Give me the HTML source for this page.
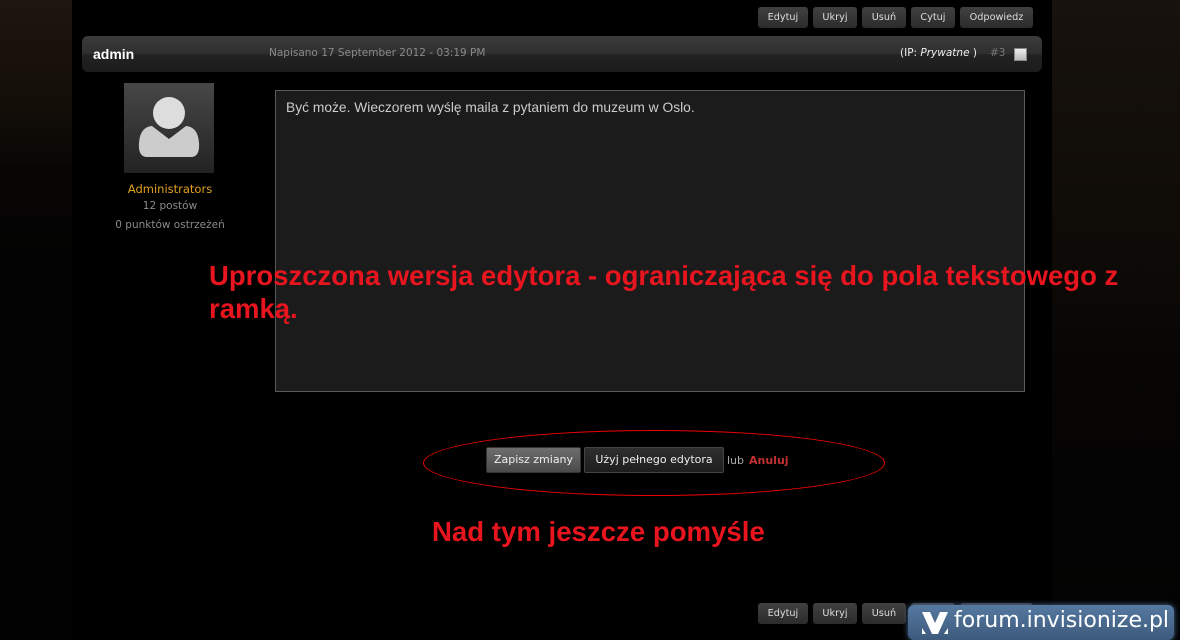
<!DOCTYPE html>
<html><head><meta charset="utf-8">
<style>
*{margin:0;padding:0;box-sizing:border-box}
body{width:1180px;height:640px;overflow:hidden;background:#000;position:relative;font-family:"Liberation Sans",Arial,sans-serif}
.bgl{position:absolute;left:0;top:0;width:72px;height:640px;background:linear-gradient(#1e160e 0,#140f09 100px,#080604 170px,#030303 260px,#020202 640px)}
.bgr{position:absolute;left:1052px;top:0;width:128px;height:640px;background:linear-gradient(#17120d 0,#100c08 200px,#060504 400px,#030303 640px)}
.btns{position:absolute;display:flex;gap:5px}
.b{height:21px;padding:0 9.6px;border-radius:3px;background:linear-gradient(#404040,#2c2c2c);color:#ddd;font-family:"DejaVu Sans",sans-serif;font-size:9.7px;line-height:21px}
.hdr{position:absolute;left:82px;top:36px;width:960px;height:36px;border-radius:6px;background:linear-gradient(#3c3c3c 0,#2e2e2e 50%,#222 52%,#1c1c1c 100%)}
.admin{position:absolute;left:11px;top:10px;color:#fff;font-weight:bold;font-size:14px}
.date{position:absolute;left:187px;top:11px;color:#8a8a8a;font-size:10.5px;font-family:"DejaVu Sans",sans-serif}
.ip{position:absolute;left:818px;top:11px;color:#eee;font-size:10.5px;font-family:"DejaVu Sans",sans-serif}
.num{position:absolute;left:908px;top:11px;color:#777;font-size:10.5px;font-family:"DejaVu Sans",sans-serif}
.cb{position:absolute;left:932px;top:12px;width:13px;height:13px;background:linear-gradient(#eee,#bbb);border:1px solid #888}
.av{position:absolute;left:124px;top:83px;width:90px;height:90px;background:linear-gradient(#474747,#232323)}
.side{position:absolute;left:100px;width:140px;text-align:center;font-family:"DejaVu Sans",sans-serif;font-size:10.5px;color:#8a8a8a}
.ta{position:absolute;left:275px;top:90px;width:750px;height:302px;background:#1b1b1b;border:1px solid #5a5a5a;color:#ccc;font-size:13.8px;padding:9px 10px}
.red{position:absolute;color:#e8151f;font-weight:bold;font-size:27.5px}
.ell{position:absolute;left:423px;top:430px;width:462px;height:66px;border:1px solid #e00;border-radius:50%}
.btn1{position:absolute;left:486px;top:447px;width:95px;height:26px;background:linear-gradient(#6e6e6e,#4a4a4a);border:1px solid #333;border-radius:2px;color:#eee;font-size:11px;text-align:center;line-height:24px;font-family:"DejaVu Sans",sans-serif}
.btn2{position:absolute;left:584px;top:447px;width:140px;height:26px;background:linear-gradient(#2e2e2e,#1e1e1e);border:1px solid #444;border-radius:2px;color:#eee;font-size:11px;text-align:center;line-height:24px;font-family:"DejaVu Sans",sans-serif}
.lub{position:absolute;left:727px;top:454px;color:#aaa;font-size:11px;font-family:"DejaVu Sans",sans-serif}
.an{position:absolute;left:749px;top:454px;color:#c23030;font-size:11px;font-weight:bold;font-family:"DejaVu Sans",sans-serif}
.wm{position:absolute;left:908px;top:605px;width:266px;height:35px;border-radius:6px;background:linear-gradient(#5679a0,#3d5a7d);box-shadow:0 0 6px #4a6a90;overflow:hidden}
.wm span{position:absolute;left:46px;top:3px;color:#fff;font-size:22px;font-family:"DejaVu Sans",sans-serif;white-space:nowrap}
</style></head><body>
<div class="bgl"></div><div class="bgr"></div>
<div class="btns" style="left:758px;top:7px"><div class="b">Edytuj</div><div class="b">Ukryj</div><div class="b">Usuń</div><div class="b">Cytuj</div><div class="b">Odpowiedz</div></div>
<div class="hdr"><div class="admin">admin</div><div class="date">Napisano 17 September 2012 - 03:19 PM</div><div class="ip">(IP: <i>Prywatne</i> )</div><div class="num">#3</div><div class="cb"></div></div>
<div class="av"><svg width="90" height="90"><circle cx="45" cy="30" r="16" fill="#ddd"/><path d="M28 43 L45 56 L62 43 Q74 44 75 60 Q76 73 68 74 L22 74 Q14 73 15 60 Q16 44 28 43Z" fill="#ccc"/></svg></div>
<div class="side" style="top:182px;color:#e0a020;font-size:11.5px">Administrators</div>
<div class="side" style="top:200px">12 postów</div>
<div class="side" style="top:219px">0 punktów ostrzeżeń</div>
<div class="ta">Być może. Wieczorem wyślę maila z pytaniem do muzeum w Oslo.</div>
<div class="red" style="left:209px;top:259px;line-height:33px;width:960px">Uproszczona wersja edytora - ograniczająca się do pola tekstowego z ramką.</div>
<div class="ell"></div>
<div class="btn1">Zapisz zmiany</div><div class="btn2">Użyj pełnego edytora</div>
<div class="lub">lub</div><div class="an">Anuluj</div>
<div class="red" style="left:432px;top:516px;font-size:27.6px">Nad tym jeszcze pomyśle</div>
<div class="btns" style="left:758px;top:603px"><div class="b">Edytuj</div><div class="b">Ukryj</div><div class="b">Usuń</div><div class="b">Cytuj</div><div class="b">Odpowiedz</div></div>
<div class="wm"><svg style="position:absolute;left:14px;top:7px" width="26" height="22"><path d="M0 0 L8 0 L13 11 L18 0 L26 0 L16 22 L10 22Z" fill="#fff"/><path d="M0 16 L4 22 L0 22Z M26 16 L22 22 L26 22Z" fill="#fff"/></svg><span>forum.invisionize.pl</span></div>
</body></html>
